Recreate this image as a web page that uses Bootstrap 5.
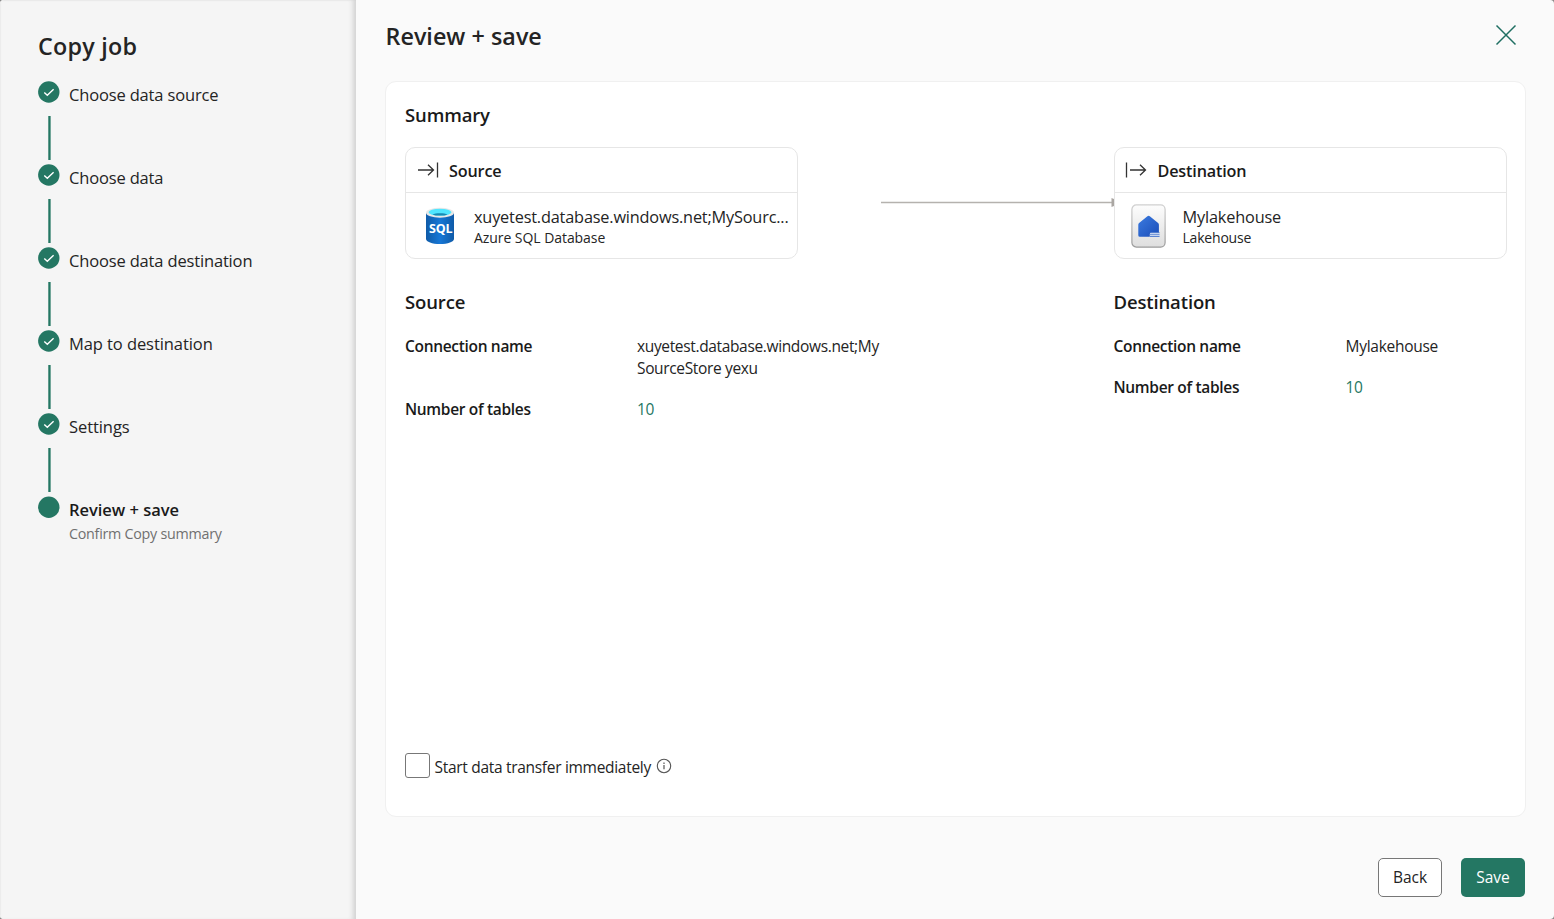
<!DOCTYPE html>
<html lang="en">
<head>
<meta charset="utf-8">
<meta name="viewport" content="width=device-width, initial-scale=1">
<title>Copy job</title>
<link href="https://cdn.jsdelivr.net/npm/bootstrap@5.3.0/dist/css/bootstrap.min.css" rel="stylesheet">
<style>
:root { --brand: #247763; --ink: #242424; }
body { font-family: "Open Sans", "Noto Sans", sans-serif; color: var(--ink); background: #8a8a8a; font-size: 15.5px; line-height: 22px; letter-spacing: -.35px; }
.shell { border-radius: 4px; background: #fafafa; }
.side { width: 356px; background: #f5f5f5; padding: 30px 20px 0 38px; box-shadow: inset -6px 0 5px -3px #d2d2d2, inset 1px 1px 1px #ececec; }
.side-title, .page-title { font-size: 23.3px; line-height: 32px; font-weight: 600; letter-spacing: .26px; }
.side-title { margin-bottom: 19px; }
.page-title { letter-spacing: .04px; }
.step { height: 83px; }
.rail { width: 22px; margin-right: 9px; }
.dot { width: 22px; height: 22px; }
.stem { width: 3px; height: 44px; margin: 13px 0 0 10px; background: linear-gradient(90deg, #247763b8 1px, #247763 1px 2px, #247763a0 2px); }
.step-label { font-size: 16.5px; line-height: 24px; padding-top: 2px; letter-spacing: -.16px; }
.step-label.near { letter-spacing: -.08px; }
.step-label.now { font-weight: 600; letter-spacing: -.03px; color: #1a1a1a; }
.step-note { font-size: 14.3px; line-height: 22px; padding-top: 1px; color: #707070; letter-spacing: -.26px; }
.main-head { height: 81px; padding: 20px 37px 0 29.5px; }
.panel { margin-left: 29px; width: 1141px; height: 736px; border: 1px solid #f0f0f0; border-radius: 11px; padding: 20px 19px 0; background: #fff; }
.sec { font-size: 18.5px; line-height: 26px; font-weight: 600; letter-spacing: -.14px; color: #1a1a1a; }
.endpoint { width: 393px; height: 112px; border: 1px solid #e6e6e6; border-radius: 10px; }
.endpoint-head { height: 45px; border-bottom: 1px solid #e6e6e6; padding: 2px 0 0 10.5px; gap: 10.5px; }
.endpoint-head svg { margin-top: -2px; }
.endpoint-title { font-size: 16.2px; font-weight: 600; letter-spacing: -.15px; color: #1a1a1a; }
.endpoint-name { font-size: 16.3px; line-height: 22px; letter-spacing: -.16px; }
.endpoint-name.long { letter-spacing: -.18px; }
.endpoint-kind { font-size: 14px; line-height: 20px; letter-spacing: -.06px; }
.endpoint-icon { width: 68px; padding-left: 16.5px; }
.wire { margin: 49.5px 0 0 83px; }
.summary { margin-top: 19px; }
.details { margin-top: 30px; }
.detail-src { width: 708.5px; }
.pair { margin-top: 19.5px; }
.pair-name { width: 232px; font-weight: 600; letter-spacing: -.32px; color: #1a1a1a; }
.pair-value { width: 245px; }
.brand-ink { color: var(--brand); }
.start { padding-bottom: 38px; letter-spacing: -.3px; }
.tick { width: 25px; height: 25px; border: 1px solid #777; border-radius: 3px; margin-right: 4.5px; appearance: none; background: #fff; }
.foot { padding: 41px 29px 0 0; gap: 19px; }
.foot .btn { width: 64px; height: 39px; font-size: 15.5px; line-height: 22px; padding: 0 0 1px; border-radius: 5px; }
.foot .btn-back { background: #fff; border: 1px solid #777; color: var(--ink); }
.foot .btn-save { background: var(--brand); color: #fff; }
</style>
</head>
<body>
<svg class="d-none">
  <symbol id="done" viewBox="0 0 22 22"><circle cx="10.800" cy="11" r="10.700" fill="#247763"/><path d="M6.300 11.500l3 2.800 6.300-6.100" fill="none" stroke="#fff" stroke-width="1.400"/></symbol>
</svg>
<div class="shell d-flex vh-100 overflow-hidden">
  <aside class="side flex-shrink-0">
    <h1 class="side-title">Copy job</h1>
    <div class="step d-flex"><div class="rail"><svg class="dot d-block"><use href="#done"/></svg><div class="stem"></div></div><div class="step-label">Choose data source</div></div>
    <div class="step d-flex"><div class="rail"><svg class="dot d-block"><use href="#done"/></svg><div class="stem"></div></div><div class="step-label">Choose data</div></div>
    <div class="step d-flex"><div class="rail"><svg class="dot d-block"><use href="#done"/></svg><div class="stem"></div></div><div class="step-label">Choose data destination</div></div>
    <div class="step d-flex"><div class="rail"><svg class="dot d-block"><use href="#done"/></svg><div class="stem"></div></div><div class="step-label near">Map to destination</div></div>
    <div class="step d-flex"><div class="rail"><svg class="dot d-block"><use href="#done"/></svg><div class="stem"></div></div><div class="step-label near">Settings</div></div>
    <div class="d-flex"><div class="rail"><svg class="dot d-block" viewBox="0 0 22 22"><circle cx="10.800" cy="11.300" r="10.700" fill="#247763"/></svg></div><div><div class="step-label now">Review + save</div><div class="step-note">Confirm Copy summary</div></div></div>
  </aside>
  <main class="flex-grow-1">
    <div class="main-head d-flex justify-content-between">
      <h2 class="page-title mb-0">Review + save</h2>
      <svg width="22" height="22" viewBox="0 0 22 22" style="margin-top:4px"><path d="M1.500 1.500l19 19M20.500 1.500l-19 19" stroke="#1f6f62" stroke-width="1.500"/></svg>
    </div>
    <div class="panel d-flex flex-column">
      <h3 class="sec mb-0">Summary</h3>
      <div class="summary d-flex">
        <div class="endpoint flex-shrink-0">
          <div class="endpoint-head d-flex align-items-center">
            <svg width="22" height="18" viewBox="0 0 22 18" fill="none" stroke="#333" stroke-width="1.300"><path d="M1 9h15.500M11 3.700L16.500 9 11 14.300M20.500 1.500v15"/></svg>
            <span class="endpoint-title">Source</span>
          </div>
          <div class="d-flex">
            <div class="endpoint-icon flex-shrink-0">
              <svg class="d-block" width="34" height="40" viewBox="0 0 34 40" style="margin-top:14px">
                <defs><linearGradient id="can"><stop offset="0" stop-color="#0f5ba8"/><stop offset=".5" stop-color="#1777d6"/><stop offset="1" stop-color="#0f5ba8"/></linearGradient></defs>
                <path d="M3 6v26c0 2.900 6.200 5 14 5s14-2.100 14-5V6z" fill="url(#can)"/>
                <ellipse cx="17" cy="5.800" rx="14" ry="5" fill="#e8e8e8"/>
                <ellipse cx="17" cy="5.200" rx="11.500" ry="3.500" fill="#50e6ff"/>
                <path d="M9.500 7.400c3-1.700 12-1.700 15 0-3 1.600-12 1.600-15 0z" fill="#198ab3"/>
                <text x="17.700" y="25.500" text-anchor="middle" font-size="12.500" font-weight="700" fill="#fff" letter-spacing="-.2">SQL</text>
              </svg>
            </div>
            <div style="padding-top:13px">
              <div class="endpoint-name long text-nowrap">xuyetest.database.windows.net;MySourc...</div>
              <div class="endpoint-kind">Azure SQL Database</div>
            </div>
          </div>
        </div>
        <svg class="wire d-block flex-shrink-0" width="233" height="12" viewBox="0 0 233 12"><path d="M0 5.500h231" stroke="#b5b2ae" stroke-width="1.400"/><path d="M230.500 1l2.500 1v7l-2.500 1z" fill="#aaa6a2"/></svg>
        <div class="endpoint flex-shrink-0" style="margin-left:-.5px">
          <div class="endpoint-head d-flex align-items-center">
            <svg width="22" height="18" viewBox="0 0 22 18" fill="none" stroke="#333" stroke-width="1.300"><path d="M1.500 1.500v15M5 9h15.500M15 3.700L20.500 9 15 14.300"/></svg>
            <span class="endpoint-title" style="letter-spacing:-.17px">Destination</span>
          </div>
          <div class="d-flex">
            <div class="endpoint-icon flex-shrink-0">
              <svg class="d-block" width="35" height="44" viewBox="0 0 35 44" style="margin-top:11px">
                <defs><linearGradient id="tile" x2="0" y2="1"><stop offset="0" stop-color="#fdfdfd"/><stop offset="1" stop-color="#dedede"/></linearGradient><linearGradient id="rim" x2="0" y2="1"><stop offset="0" stop-color="#d0d0d0"/><stop offset="1" stop-color="#9a9a9a"/></linearGradient><linearGradient id="home" x2="1" y2="1"><stop offset="0" stop-color="#3b7be0"/><stop offset="1" stop-color="#1b4db8"/></linearGradient></defs>
                <rect x=".9" y=".9" width="33.200" height="42.200" rx="4.500" fill="url(#tile)" stroke="url(#rim)" stroke-width="1.200"/>
                <path d="M7.300 20.700q0-1 .8-1.700l8.300-6.800q1.200-1 2.400 0l8.300 6.800q.8.700.8 1.700V28.500h-7.500q-1.600 0-1.600 1.600v2.600H8.800q-1.500 0-1.500-1.500z" fill="url(#home)"/>
                <path d="M19 28.700h9.500M19 30.700h9.500M19 32.500h9.500" stroke="#3e6fcc" stroke-width=".9"/><path d="M19 29.700h9.500M19 31.600h9.500" stroke="#c3d4f3" stroke-width=".9"/>
              </svg>
            </div>
            <div style="padding-top:13px">
              <div class="endpoint-name">Mylakehouse</div>
              <div class="endpoint-kind" style="letter-spacing:-.2px">Lakehouse</div>
            </div>
          </div>
        </div>
      </div>
      <div class="details d-flex">
        <div class="detail-src flex-shrink-0">
          <h3 class="sec mb-0">Source</h3>
          <div class="pair d-flex"><div class="pair-name">Connection name</div><div class="pair-value">xuyetest.database.windows.net;My<br>SourceStore yexu</div></div>
          <div class="pair d-flex"><div class="pair-name">Number of tables</div><div class="pair-value brand-ink">10</div></div>
        </div>
        <div>
          <h3 class="sec mb-0">Destination</h3>
          <div class="pair d-flex"><div class="pair-name flex-shrink-0">Connection name</div><div style="letter-spacing:-.27px">Mylakehouse</div></div>
          <div class="pair d-flex"><div class="pair-name flex-shrink-0">Number of tables</div><div class="brand-ink">10</div></div>
        </div>
      </div>
      <label class="start d-flex mt-auto">
        <input type="checkbox" class="tick">
        <span style="padding-top:3.500px">Start data transfer immediately</span>
        <svg width="16" height="16" viewBox="0 0 16 16" style="margin:5px 0 0 5px" fill="none" stroke="#555"><circle cx="8" cy="8" r="6.700" stroke-width="1.100"/><path d="M8 7v4.300M8 4.500v1.400" stroke-width="1.200"/></svg>
      </label>
    </div>
    <div class="foot d-flex justify-content-end">
      <button class="btn btn-back">Back</button>
      <button class="btn btn-save">Save</button>
    </div>
  </main>
</div>
<script src="https://cdn.jsdelivr.net/npm/bootstrap@5.3.0/dist/js/bootstrap.bundle.min.js"></script>
</body>
</html>
